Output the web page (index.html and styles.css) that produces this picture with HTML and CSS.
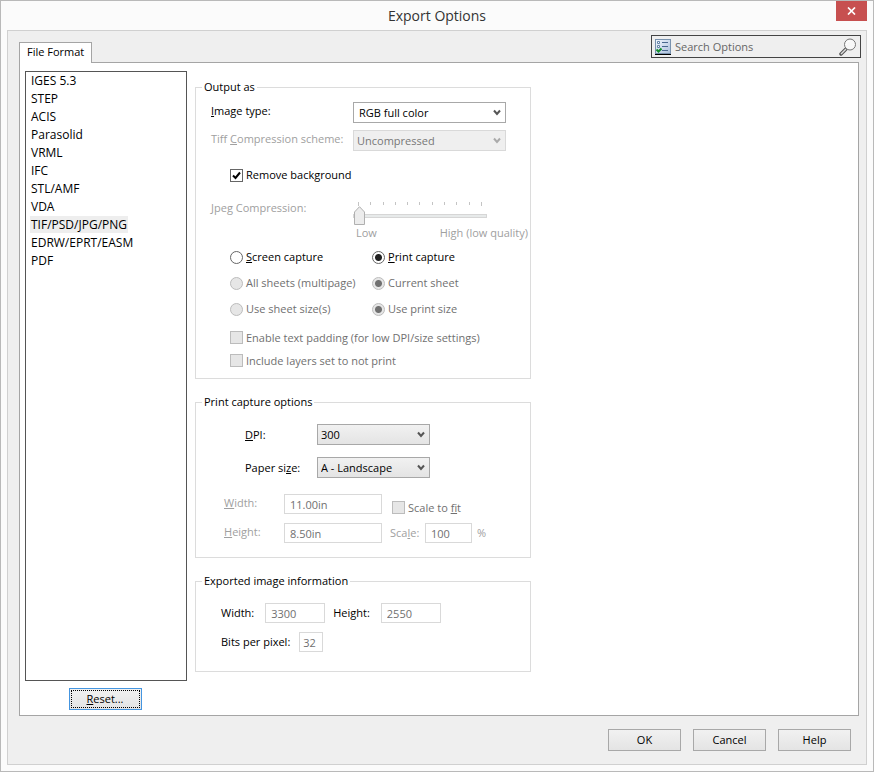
FILE: index.html
```html
<!DOCTYPE html>
<html lang="en">
<head>
<meta charset="UTF-8">
<meta name="viewport" content="width=device-width, initial-scale=1.0">
<title>Export Options</title>
<link rel="stylesheet" href="styles.css">
</head>
<body>
<div class="window">
    <header class="titlebar">
        <h1>Export Options</h1>
        <button class="close" type="button" aria-label="Close">
            <svg width="9" height="8" viewBox="0 0 9 8"><path d="M1 .5 8 7.5M8 .5 1 7.5" stroke="#fff" stroke-width="1.7"/></svg>
        </button>
    </header>
    <form class="dialog" onsubmit="event.preventDefault();">
        <div class="top">
            <button class="tab" type="button">File Format</button>
            <div class="search">
                <svg width="16" height="16" viewBox="0 0 16 16">
                    <defs><linearGradient id="sheet" x2="1" y2="1"><stop stop-color="#f4f9ff"/><stop offset="1" stop-color="#a9bedb"/></linearGradient></defs>
                    <rect x=".5" y=".5" width="15" height="14" fill="url(#sheet)" stroke="#7992ae"/>
                    <path d="M0 15.500H16" stroke="#000"/>
                    <path d="M2.500 2.500h2v2h-2zM2.500 6.500h2v2h-2z" fill="#fff" stroke="#6684a8"/>
                    <path d="M7 3.500h6M7 7.500h6M7 11.500h6" stroke="#49688f"/>
                    <path d="m1.500 10.500 2 2 3-3" fill="none" stroke="#12902a" stroke-width="2"/>
                </svg>
                <input type="text" placeholder="Search Options" aria-label="Search Options">
                <svg width="18" height="18" viewBox="0 0 18 18">
                    <path d="m2 16 5-5" stroke="#555" stroke-width="3.500" stroke-linecap="round"/>
                    <path d="m2 16 5-5" stroke="#ddd" stroke-width="1.500"/>
                    <circle cx="11" cy="6.500" r="5.500" fill="#f8f8f8" stroke="#777"/>
                    <path d="M7.500 6.500a3.500 3.500 0 0 1 3.500-3.500" fill="none" stroke="#fff"/>
                </svg>
            </div>
        </div>

        <main class="panel">
            <div class="formats">
                <ul role="listbox" aria-label="File formats">
                    <li role="option"><span>IGES 5.3</span></li>
                    <li role="option"><span>STEP</span></li>
                    <li role="option"><span>ACIS</span></li>
                    <li role="option"><span>Parasolid</span></li>
                    <li role="option"><span>VRML</span></li>
                    <li role="option"><span>IFC</span></li>
                    <li role="option"><span>STL/AMF</span></li>
                    <li role="option"><span>VDA</span></li>
                    <li role="option" aria-selected="true" class="selected"><span>TIF/PSD/JPG/PNG</span></li>
                    <li role="option"><span>EDRW/EPRT/EASM</span></li>
                    <li role="option"><span>PDF</span></li>
                </ul>
                <button class="btn reset" type="button"><span><u>R</u>eset...</span></button>
            </div>

            <div class="options">
                <fieldset class="output">
                    <legend>Output as</legend>
                    <div class="settings">
                        <label for="imageType"><u>I</u>mage type:</label>
                        <select id="imageType" class="light"><option>RGB full color</option></select>
                        <label for="tiff" class="faded">Tiff <u>C</u>ompression scheme:</label>
                        <select id="tiff" disabled><option>Uncompressed</option></select>
                    </div>
                    <div class="check background">
                        <input type="checkbox" id="removeBg" checked>
                        <label for="removeBg">Remove background</label>
                    </div>
                    <div class="jpeg">
                        <label for="jpeg" class="faded"><u>J</u>peg Compression:</label>
                        <div class="slider">
                            <div class="ticks"><i></i><i></i><i></i><i></i><i></i><i></i><i></i><i></i><i></i><i></i><i></i></div>
                            <input type="range" id="jpeg" min="0" max="10" value="0" disabled>
                            <div class="captions faded"><span>Low</span><span>High (low quality)</span></div>
                        </div>
                    </div>
                    <div class="radios">
                        <div class="check"><input type="radio" name="capture" id="screen"><label for="screen"><u>S</u>creen capture</label></div>
                        <div class="check"><input type="radio" name="capture" id="print" checked><label for="print"><u>P</u>rint capture</label></div>
                        <div class="check"><input type="radio" name="sheets" id="all" disabled><label for="all">All sheets (multipage)</label></div>
                        <div class="check"><input type="radio" name="sheets" id="current" checked disabled><label for="current">Current sheet</label></div>
                        <div class="check"><input type="radio" name="size" id="sheetSize" disabled><label for="sheetSize">Use sheet size(s)</label></div>
                        <div class="check"><input type="radio" name="size" id="printSize" checked disabled><label for="printSize">Use print size</label></div>
                    </div>
                    <div class="extras">
                        <div class="check"><input type="checkbox" id="padding" disabled><label for="padding">Enable text padding (for low DPI/size settings)</label></div>
                        <div class="check"><input type="checkbox" id="layers" disabled><label for="layers">Include layers set to not print</label></div>
                    </div>
                </fieldset>

                <fieldset class="capture">
                    <legend>Print capture options</legend>
                    <div class="paper">
                        <label for="dpi"><u>D</u>PI:</label>
                        <select id="dpi"><option>300</option></select>
                        <label for="paper">Paper si<u>z</u>e:</label>
                        <select id="paper"><option>A - Landscape</option></select>
                    </div>
                    <div class="dimensions">
                        <label for="width" class="faded"><u>W</u>idth:</label>
                        <input type="text" id="width" value="11.00in" disabled>
                        <div class="check fit"><input type="checkbox" id="fit" disabled><label for="fit">Scale to <u>f</u>it</label></div>
                        <label for="height" class="faded"><u>H</u>eight:</label>
                        <input type="text" id="height" value="8.50in" disabled>
                        <div class="scale faded">
                            <label for="scale">Sca<u>l</u>e:</label>
                            <input type="text" id="scale" value="100" disabled>
                            <span>%</span>
                        </div>
                    </div>
                </fieldset>

                <fieldset class="info">
                    <legend>Exported image information</legend>
                    <div class="line">
                        <label for="outWidth">Width:</label>
                        <input type="text" id="outWidth" value="3300" disabled>
                        <label for="outHeight">Height:</label>
                        <input type="text" id="outHeight" value="2550" disabled>
                    </div>
                    <div class="line bits">
                        <label for="bits">Bits per pixel:</label>
                        <input type="text" id="bits" value="32" disabled>
                    </div>
                </fieldset>
            </div>
        </main>

        <footer class="actions">
            <button class="btn" type="submit">OK</button>
            <button class="btn" type="button">Cancel</button>
            <button class="btn" type="button">Help</button>
        </footer>
    </form>
</div>
</body>
</html>
```
FILE: styles.css
```css
* {
    box-sizing: border-box;
}
body {
    margin: 0;
    font: 11px/16px "Open Sans", "Noto Sans", sans-serif;
    color: #000;
}
button, input, select {
    font: inherit;
    color: inherit;
    margin: 0;
    border-radius: 0;
}
.window {
    display: flex;
    flex-direction: column;
    min-height: 100vh;
    padding: 0 6px 6px;
    border: 1px solid #b9b9b9;
    background: #fbfbfb;
}

/* Title bar */
.titlebar {
    position: relative;
    height: 29px;
}
h1 {
    margin: 0;
    font-size: 14px;
    font-weight: normal;
    line-height: 30px;
    text-align: center;
    color: #333;
}
.close {
    position: absolute;
    top: 0;
    right: 0;
    width: 31px;
    height: 20px;
    padding: 0;
    border: none;
    background: #c75050;
}

/* Dialog body */
.dialog {
    flex: 1;
    display: flex;
    flex-direction: column;
    border: 1px solid #d0d0d0;
    background: #efefef;
}
.top {
    display: flex;
    justify-content: space-between;
    align-items: flex-start;
    height: 31px;
    padding: 4px 5px 0 11px;
}
.tab {
    position: relative;
    align-self: flex-end;
    height: 21px;
    margin-bottom: -1px;
    padding: 0 7px 2px;
    border: 1px solid #a5a5a5;
    border-bottom: none;
    background: #fff;
}
.search {
    display: flex;
    align-items: center;
    width: 210px;
    height: 23px;
    padding: 0 3px;
    border: 1px solid #444;
}
.search input {
    flex: 1;
    min-width: 0;
    padding: 0 4px;
    border: none;
    background: none;
}
.search input::placeholder {
    color: #666;
}
.panel {
    flex: 1;
    display: flex;
    gap: 8px;
    margin: 0 7px 0 11px;
    padding: 8px 5px 5px;
    border: 1px solid #a5a5a5;
    background: #fff;
}

/* Format list */
.formats {
    display: flex;
    flex-direction: column;
    width: 162px;
}
.formats ul {
    flex: 1;
    margin: 0 0 7px;
    padding: 0 4px;
    list-style: none;
    font-size: 12px;
    line-height: 18px;
    border: 1px solid #555;
}
.formats li span {
    padding: 0 1px;
}
.formats .selected span {
    background: #eee;
}
.btn {
    width: 73px;
    height: 22px;
    padding: 0;
    border: 1px solid #a8a8a8;
    background: linear-gradient(#f1f1f1, #e4e4e4);
}
.reset {
    align-self: center;
    margin-left: -2px;
    padding: 1px;
    border-color: #4495e0;
}
.reset span {
    display: block;
    line-height: 16px;
    border: 1px dotted #000;
}

/* Option groups */
.options {
    flex: 0 1 336px;
    padding-top: 8px;
}
fieldset {
    min-width: 0;
    margin: 0 0 15px;
    padding: 0 2px 0 15px;
    border: 1px solid #dcdcdc;
}
legend {
    margin-left: -9px;
    padding: 0 2px;
}
select {
    appearance: none;
    height: 21px;
    padding: 0 3px;
    border: 1px solid #a8a8a8;
    background: url("data:image/svg+xml,%3Csvg xmlns='http://www.w3.org/2000/svg' width='8' height='7'%3E%3Cpath d='M1 1.500 4 5 7 1.500' fill='none' stroke='%23555' stroke-width='2'/%3E%3C/svg%3E") no-repeat right 4px center, linear-gradient(#f1f1f1, #e4e4e4);
}
select.light {
    padding-left: 5px;
    background-color: #fff;
    background-image: url("data:image/svg+xml,%3Csvg xmlns='http://www.w3.org/2000/svg' width='8' height='7'%3E%3Cpath d='M1 1.500 4 5 7 1.500' fill='none' stroke='%23555' stroke-width='2'/%3E%3C/svg%3E");
}
select:disabled {
    opacity: 1;
    color: #777;
    border-color: #d9d9d9;
    background-color: #efefef;
    background-image: url("data:image/svg+xml,%3Csvg xmlns='http://www.w3.org/2000/svg' width='8' height='7'%3E%3Cpath d='M1 1.500 4 5 7 1.500' fill='none' stroke='%23aaa' stroke-width='2'/%3E%3C/svg%3E");
}
input[type="text"]:disabled {
    min-width: 0;
    height: 20px;
    padding: 0 5px;
    color: #707070;
    border: 1px solid #d9d9d9;
    background: #fff;
}
.faded {
    color: #a0a0a0;
}
.settings {
    display: grid;
    grid-template-columns: 142px 153px;
    row-gap: 7px;
    padding-top: 7px;
}
.settings label, .dimensions > label {
    padding-top: 1px;
}
.check {
    display: flex;
    align-items: center;
    gap: 3px;
}
.check input {
    appearance: none;
    flex: none;
    width: 13px;
    height: 13px;
    border: 1px solid #666;
    background: #fff;
}
.check input[type="radio"] {
    border-radius: 50%;
}
.check input[type="radio"]:checked {
    background: radial-gradient(circle, #222 0 3px, #fff 4px);
}
.check input[type="checkbox"]:checked {
    background: url("data:image/svg+xml,%3Csvg xmlns='http://www.w3.org/2000/svg' width='11' height='11'%3E%3Cpath d='M2 5.500 4.500 8 9 2.500' fill='none' stroke='%23000' stroke-width='2'/%3E%3C/svg%3E");
}
.check input:disabled {
    border-color: #bcbcbc;
    background: #e6e6e6;
}
.check input[type="radio"]:checked:disabled {
    background: radial-gradient(circle, #707070 0 3px, #e6e6e6 4px);
}
.check input:disabled + label {
    color: #707070;
}
.background {
    height: 20px;
    margin: 14px 0 15px 19px;
}
.jpeg {
    display: grid;
    grid-template-columns: 142px 1fr;
}
.slider input {
    display: block;
    appearance: none;
    width: 134px;
    height: 19px;
    background: none;
}
.slider input::-webkit-slider-runnable-track {
    height: 4px;
    border: 1px solid #d6d6d6;
    background: #e7eaea;
}
.slider input::-webkit-slider-thumb {
    appearance: none;
    width: 11px;
    height: 19px;
    margin-top: -9px;
    background: url("data:image/svg+xml,%3Csvg xmlns='http://www.w3.org/2000/svg' width='11' height='19'%3E%3Cpath d='M.5 6 5.500.7 10.500 6V18.500H.5z' fill='%23ececec' stroke='%23b0b0b0'/%3E%3C/svg%3E");
}
.ticks {
    display: flex;
    justify-content: space-between;
    width: 134px;
    height: 6px;
    padding: 2px 5px 0;
}
.ticks i {
    width: 1px;
    height: 3px;
    background: #c4c4c4;
}
.ticks i:first-child, .ticks i:last-child {
    height: 4px;
}
.captions {
    display: flex;
    justify-content: space-between;
    padding-left: 3px;
}
.radios {
    display: grid;
    grid-template-columns: 142px 1fr;
    grid-auto-rows: 26px;
    margin: 3px 0 4px 19px;
}
.extras {
    display: grid;
    grid-auto-rows: 23px;
    padding: 0 0 6px 19px;
}
.paper {
    display: grid;
    grid-template-columns: 72px 113px;
    row-gap: 12px;
    align-items: center;
    padding: 14px 0 16px 34px;
}
.dimensions {
    display: grid;
    grid-template-columns: 60px 98px 1fr;
    row-gap: 9px;
    padding: 0 0 14px 13px;
}
.fit {
    align-self: end;
    height: 13px;
    margin-left: 10px;
}
.scale {
    display: flex;
    align-items: center;
    margin-left: 8px;
}
.scale label {
    width: 35px;
}
.scale input {
    width: 47px;
    margin-right: 5px;
}
.info .line {
    display: flex;
    align-items: center;
    padding: 14px 0 0 10px;
}
.info .line input {
    width: 60px;
    margin: 0 8px 0 11px;
}
.info .bits {
    padding: 9px 0 19px 10px;
}
.info .bits input {
    width: 24px;
    margin-left: 9px;
    padding: 0 3px;
}

/* Bottom buttons */
.actions {
    display: flex;
    justify-content: flex-end;
    gap: 12px;
    padding: 13px 15px 13px;
}
```
